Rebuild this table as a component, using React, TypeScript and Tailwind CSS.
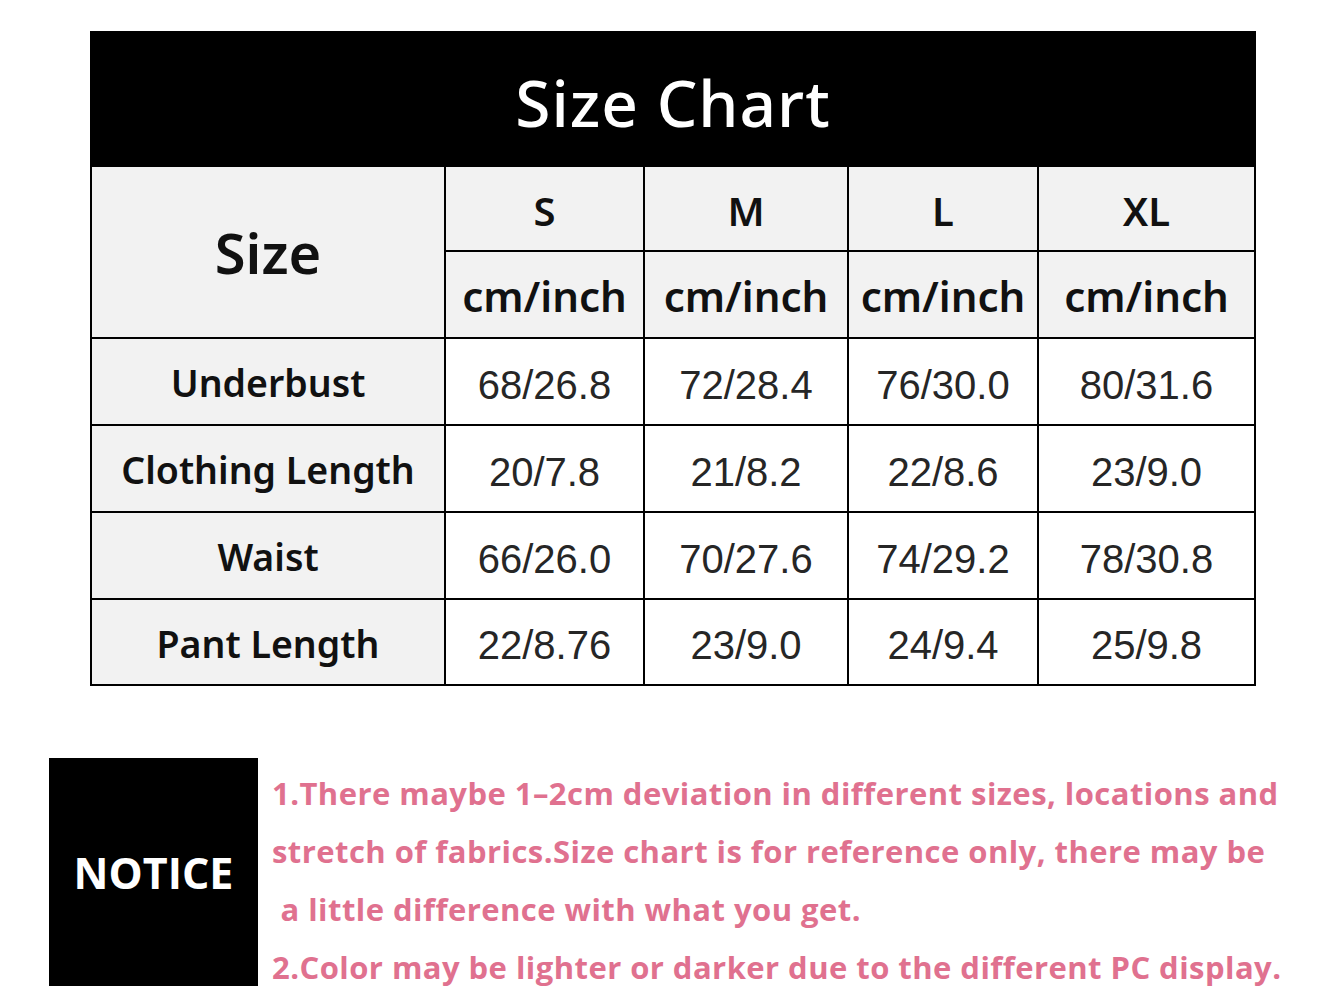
const sizes = ["S", "M", "L", "XL"];

const rows = [
  { label: "Underbust", values: ["68/26.8", "72/28.4", "76/30.0", "80/31.6"] },
  { label: "Clothing Length", values: ["20/7.8", "21/8.2", "22/8.6", "23/9.0"] },
  { label: "Waist", values: ["66/26.0", "70/27.6", "74/29.2", "78/30.8"] },
  { label: "Pant Length", values: ["22/8.76", "23/9.0", "24/9.4", "25/9.8"] },
];

const notes = [
  "1.There maybe 1–2cm deviation in different sizes, locations and",
  "stretch of fabrics.Size chart is for reference only, there may be",
  "\u00a0a little difference with what you get.",
  "2.Color may be lighter or darker due to the different PC display.",
];

const App = () => {
  return (
    <div className="w-[1340px] h-[998px] bg-white overflow-hidden pt-[31px]">
      <div
        className="ml-[90px] w-[1166px] grid grid-cols-[352px_197px_202px_188px_215px] grid-rows-[132px_83px_85px_85px_85px_85px_84px] gap-[2px] p-[2px] bg-black"
        style={{ fontFamily: '"Noto Sans", sans-serif' }}
      >
        <div className="col-span-5 bg-black flex items-center justify-center text-white text-[64px] font-medium tracking-[1px] pt-[8px]">
          Size Chart
        </div>
        <div className="row-span-2 bg-[#f2f2f2] flex items-center justify-center text-[56px] font-semibold text-[#111]">
          Size
        </div>
        {sizes.map((s) => (
          <div
            key={s}
            className="bg-[#f2f2f2] flex items-center justify-center text-[40px] font-semibold text-[#111] pt-[4px]"
          >
            {s}
          </div>
        ))}
        {sizes.map((s) => (
          <div
            key={s + "u"}
            className="bg-[#f2f2f2] flex items-center justify-center text-[42px] font-semibold text-[#111] pt-[2px]"
          >
            cm/inch
          </div>
        ))}
        {rows.map((r) => (
          <>
            <div
              key={r.label}
              className="bg-[#f2f2f2] flex items-center justify-center text-[37.5px] font-semibold text-[#111] pt-[4px]"
            >
              {r.label}
            </div>
            {r.values.map((v, i) => (
              <div
                key={r.label + i}
                className="bg-white flex items-center justify-center text-[40px] text-[#262626] pt-[6px]"
                style={{ fontFamily: '"Liberation Sans", sans-serif' }}
              >
                {v}
              </div>
            ))}
          </>
        ))}
      </div>

      <div className="flex mt-[72px] ml-[49px] gap-[14px]" style={{ fontFamily: '"Open Sans", sans-serif' }}>
        <div className="w-[209px] h-[228px] bg-black flex items-center justify-center text-white text-[43px] font-bold pt-[2px]">
          NOTICE
        </div>
        <div className="pt-[6px] text-[#e0718f] text-[31px] font-bold tracking-[0.45px] leading-[58px] whitespace-nowrap">
          {notes.map((n) => (
            <div key={n}>{n}</div>
          ))}
        </div>
      </div>
    </div>
  );
};

export default App;
